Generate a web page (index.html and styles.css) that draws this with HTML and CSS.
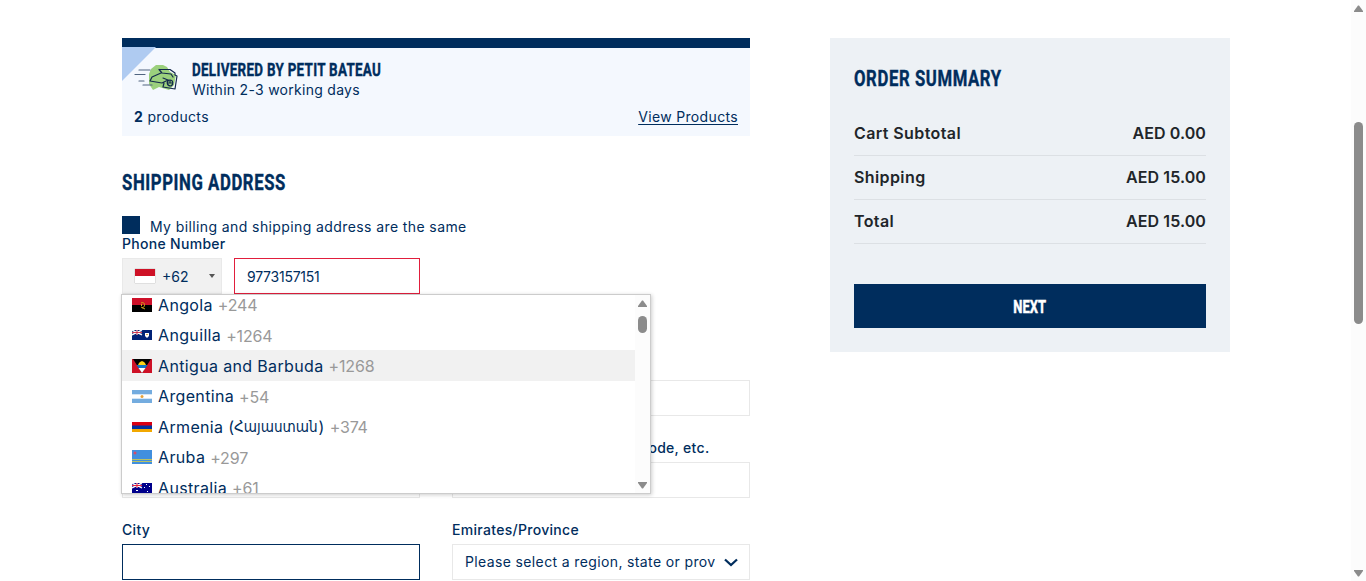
FILE: index.html
```html
<!DOCTYPE html>
<html lang="en">
<head>
<meta charset="utf-8">
<title>Shipping</title>
<link rel="stylesheet" href="styles.css">
</head>
<body>
<div class="page">
  <main class="content">
    <section class="checkout">
      <div class="delivery">
        <div class="delivery-head">
          <svg class="corner" width="34" height="34" viewBox="0 0 34 34"><path d="M0 0H34L0 34Z" fill="#afcbf1"/></svg>
          <svg class="hand" width="46" height="30" viewBox="0 0 46 30" fill="none" stroke="#12284c" stroke-width="1.2" stroke-linecap="round" stroke-linejoin="round">
            <path d="M17 6L22 2L29 2L33 4L36 9L42 12L40 22L35 27L25 24L19 27L15 21L15 11Z" fill="#9bd07d" stroke="none"/>
            <path d="M5 7H16M1 11.500H11M5 18H10M9 22H18" stroke="#506580"/>
            <path d="M25 6.500H36L41 10V12M25 6.500L28 10L37 11L39 14M27 10L18 14L16 18L28 20L34 17L29 15M41 12L43 13L41 26L29 24L30 20M35 17C32 19 33 23 37 23C40 21 39 17 36 17V20M34 20H38"/>
          </svg>
          <div>
            <h2 class="delivery-title"><span>DELIVERED BY PETIT BATEAU</span></h2>
            <p class="delivery-time">Within 2-3 working days</p>
          </div>
        </div>
        <div class="delivery-foot">
          <p><b>2</b> products</p>
          <a class="view">View Products</a>
        </div>
      </div>
      <h1 class="title shipping-title"><span>SHIPPING ADDRESS</span></h1>
      <div class="same"><i class="check"></i><span>My billing and shipping address are the same</span></div>
      <div class="phone">
        <div class="label phone-label">Phone Number</div>
        <div class="phone-row">
          <div class="dial"><i class="flag-id"></i><span>+62</span><i class="caret"></i></div>
          <div class="field phone-field">9773157151</div>
        </div>
        <div class="countries">
          <div class="country-list">
            <div class="country"><svg class="flag" viewBox="0 0 20 14"><path fill="#ce1029" d="M0 0h20v7H0z"/><path d="M0 7h20v7H0z"/><path d="M9 5c4-2 5 4 1 5M9 9l4 2M9.500 6v2" stroke="#d3a51c" fill="none"/></svg><span class="name">Angola</span><span class="code">+244</span></div>
            <div class="country"><svg class="flag" viewBox="0 0 20 10"><path fill="#012276" d="M0 0h20v10H0z"/><path d="M0 0l10 5M10 0L0 5M5 0v5M0 2.500h10" stroke="#fff" stroke-width="1.300"/><path d="M5 0v5M0 2.500h10" stroke="#c8102e" stroke-width=".8"/><path d="M13 3h4v3l-2 2-2-2z" fill="#fff"/><path d="M14 4h2v1h-2z" fill="#d7a64b"/></svg><span class="name">Anguilla</span><span class="code">+1264</span></div>
            <div class="country active"><svg class="flag" viewBox="0 0 20 14"><path fill="#ce1126" d="M0 0h20v14H0z"/><path d="M1 0h18l-9 14z"/><path d="M4.500 6h11l-2 3h-7z" fill="#1073c6"/><path d="M6.500 9h7L10 14z" fill="#fff"/><path d="M6 6l1-2 1-1 2-1 2 1 1 1 1 2z" fill="#fcd116"/></svg><span class="name">Antigua and Barbuda</span><span class="code">+1268</span></div>
            <div class="country"><svg class="flag" viewBox="0 0 20 13"><path fill="#74acdf" d="M0 0h20v13H0z"/><path fill="#fff" d="M0 4.300h20v4.400H0z"/><circle cx="10" cy="6.500" r="1.500" fill="#e8a33a"/></svg><span class="name">Argentina</span><span class="code">+54</span></div>
            <div class="country"><svg class="flag" viewBox="0 0 20 10"><path fill="#d90012" d="M0 0h20v4H0z"/><path fill="#0033a0" d="M0 3.500h20v4H0z"/><path fill="#f2a800" d="M0 7h20v3H0z"/></svg><span class="name armenia">Armenia (<span class="hy">Հայաստան</span>)</span><span class="code">+374</span></div>
            <div class="country"><svg class="flag" viewBox="0 0 20 14"><path fill="#418fde" d="M0 0h20v14H0z"/><path d="M0 9.500h20M0 11.500h20" stroke="#b9c163" stroke-width="1.200"/><path d="M3 1l.7 1.300L5 3l-1.300.7L3 5l-.7-1.300L1 3l1.300-.7z" fill="#e8435a"/></svg><span class="name">Aruba</span><span class="code">+297</span></div>
            <div class="country"><svg class="flag" viewBox="0 0 20 10"><path fill="#00008b" d="M0 0h20v10H0z"/><path d="M0 0l10 5M10 0L0 5M5 0v5M0 2.500h10" stroke="#fff" stroke-width="1.300"/><path d="M5 0v5M0 2.500h10" stroke="#e8112d" stroke-width=".9"/><path d="M4 7h2v1H4zM14 1h1v1h-1zM17 3h1v1h-1zM12 4h1v1h-1zM15 8h1v1h-1z" fill="#fff"/></svg><span class="name">Australia</span><span class="code">+61</span></div>
          </div>
          <div class="bar"><svg class="arrow" viewBox="0 0 9 7"><path d="M4 .5h1L9 6v1H0V6z"/></svg><i class="thumb small"></i><svg class="arrow down" viewBox="0 0 9 7"><path d="M4 .5h1L9 6v1H0V6z"/></svg></div>
        </div>
      </div>
      <div class="form">
        <div><div class="label"></div><div class="field"></div></div>
        <div><div class="label"></div><div class="field"></div></div>
        <div><div class="label"></div><div class="field"></div></div>
        <div><div class="label zip">code, etc.</div><div class="field"></div></div>
        <div><div class="label">City</div><div class="field focus"></div></div>
        <div><div class="label">Emirates/Province</div><div class="field select"><span>Please select a region, state or province</span><svg width="14" height="9" viewBox="0 0 14 9"><path d="M1 1.500l6 5.500 6-5.500" fill="none" stroke="#002d5d" stroke-width="2.300"/></svg></div></div>
      </div>
    </section>
    <aside class="summary">
      <h2 class="title summary-title"><span>ORDER SUMMARY</span></h2>
      <div class="line"><span>Cart Subtotal</span><span>AED 0.00</span></div>
      <div class="line"><span>Shipping</span><span>AED 15.00</span></div>
      <div class="line"><span>Total</span><span>AED 15.00</span></div>
      <div class="next"><span>NEXT</span></div>
    </aside>
  </main>
  <div class="bar page-bar"><svg class="arrow" viewBox="0 0 9 7"><path d="M4 .5h1L9 6v1H0V6z"/></svg><i class="thumb"></i><svg class="arrow down" viewBox="0 0 9 7"><path d="M4 .5h1L9 6v1H0V6z"/></svg></div>
</div>
</body>
</html>
```
FILE: styles.css
```css
* { box-sizing: border-box; }
body { margin: 0; background: #fff; color: #002d5d; font: 14px/18px Inter, "Noto Sans", sans-serif; letter-spacing: .37px; overflow: hidden; }
h1, h2, p { margin: 0; }
.page { display: flex; height: 581px; overflow: hidden; }
.content { flex: 1; display: flex; align-items: flex-start; gap: 80px; padding: 38px 0 0 122px; }
.checkout { width: 628px; }
.delivery { height: 98px; border-top: 10px solid #002d5d; background: #f4f8fe; position: relative; }
.corner { position: absolute; left: 0; top: -1px; }
.delivery-head { display: flex; gap: 12px; padding: 12px 0 0 12px; height: 60px; }
.hand { margin-top: 3px; width: 46px; flex: none; position: relative; }
.delivery-title { font: 700 18px/20px Roboto, sans-serif; letter-spacing: .4px; height: 20px; }
.title { font: 700 22.5px/28px Roboto, sans-serif; letter-spacing: .8px; }
.delivery-title span, .title span { display: inline-block; transform-origin: left; white-space: nowrap; -webkit-text-stroke: .4px #002d5d; }
.delivery-title span { transform: scaleX(.745); }
.title span { transform: scaleX(.743); }
.delivery-time { line-height: 19px; letter-spacing: .28px; }
.delivery-foot { display: flex; justify-content: space-between; padding: 0 12px; letter-spacing: .34px; }
.view { text-decoration: underline; text-underline-offset: 2px; }
.shipping-title { margin-top: 32px; }
.same { display: flex; gap: 10px; align-items: center; margin-top: 20px; height: 20px; line-height: 20px; letter-spacing: .4px; }
.same span { padding-top: 1px; }
.check { width: 18px; height: 18px; background: #002d5d; margin-top: -3px; }
.phone { position: relative; margin-top: -1px; }
.label { font-weight: 500; height: 18px; line-height: 18px; margin-bottom: 5px; white-space: nowrap; letter-spacing: .3px; }
.phone-row { display: flex; gap: 12px; }
.dial { width: 100px; height: 36px; background: #f1f1f1; border: 1px solid #e9e9e9; display: flex; align-items: center; padding: 0 6px 0 12px; }
.dial span { margin-left: 7px; flex: 1; padding-top: 1px; letter-spacing: 0; }
.flag-id { width: 20px; height: 14px; background: linear-gradient(#ce1126 50%, #fff 50%); box-shadow: 0 0 1px #888; }
.caret { border: 3px solid transparent; border-top: 4px solid #555; border-bottom: 0; }
.field { height: 36px; border: 1px solid #e8e8e8; padding: 0 12px; line-height: 35px; background: #fff; }
.phone-field { width: 186px; border-color: #e11e3c; letter-spacing: -.25px; }
.countries { position: absolute; z-index: 2; left: -1px; top: 59px; width: 530px; height: 200px; background: #fff; border: 1px solid #ccc; box-shadow: 1px 1px 4px rgba(0,0,0,.2); display: flex; overflow: hidden; }
.country-list { flex: 1; margin-top: -6px; }
.country { height: 30.5px; display: flex; align-items: center; padding: 1px 10px 0; font-size: 16px; line-height: 22px; }
.active { background: #f1f1f1; }
.flag { width: 20px; margin-right: 6px; }
.name { letter-spacing: .35px; }
.hy { display: inline-block; width: 84px; height: 22px; vertical-align: top; white-space: nowrap; font-family: "DejaVu Sans", sans-serif; letter-spacing: 0; transform: scaleX(.85); transform-origin: left; }
.armenia { white-space: nowrap; }
.code { color: #999; margin: 1px 0 0 5px; letter-spacing: -.15px; }
.bar { width: 15px; background: #fcfcfc; display: flex; flex-direction: column; align-items: center; padding: 5px 0 4px; }
.arrow { width: 9px; height: 7px; fill: #8b8b8b; }
.down { transform: rotate(180deg); margin-top: auto; }
.thumb { width: 9px; height: 202px; border-radius: 5px; background: #8b8b8b; margin-top: 110px; }
.small { height: 17px; margin-top: 9px; }
.form { display: grid; grid-template-columns: 298px 298px; gap: 23px 32px; margin-top: 63px; }
.zip { padding-left: 188px; }
.focus { border-color: #002d5d; }
.select { display: flex; align-items: center; gap: 9px; padding-right: 11px; }
.select span { width: 251px; overflow: hidden; white-space: nowrap; line-height: 18px; }
.select svg { flex: none; }
.summary { width: 400px; height: 314px; padding: 26px 24px; background: #edf1f5; color: #212529; }
.summary-title { color: #002d5d; margin-bottom: 20px; }
.line { height: 44px; border-bottom: 1px solid #dce0e4; display: flex; justify-content: space-between; font-size: 16px; font-weight: 600; line-height: 43px; letter-spacing: .2px; }
.line span:first-child { letter-spacing: .4px; }
.line span:last-child { letter-spacing: .1px; }
.next { height: 44px; background: #002d5d; color: #fff; margin-top: 40px; text-align: center; font: 700 18px/45px Roboto, sans-serif; letter-spacing: 0; }
.next span { display: inline-block; transform: scaleX(.72); -webkit-text-stroke: .5px #fff; }
```
